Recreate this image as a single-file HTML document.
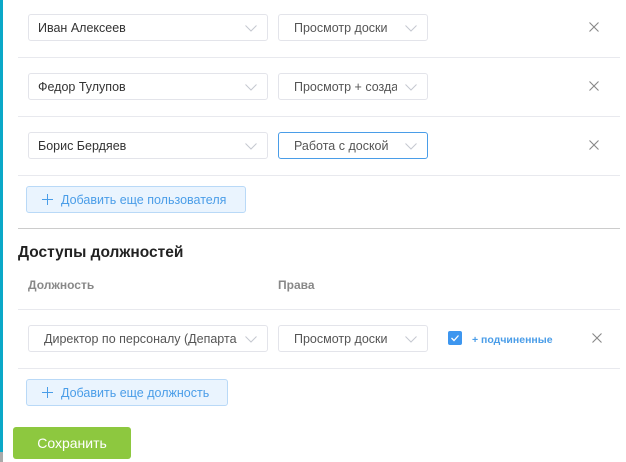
<!DOCTYPE html>
<html><head><meta charset="utf-8"><style>
body{margin:0;width:626px;height:462px;background:#fff;font-family:"Liberation Sans","Noto Sans CJK SC",sans-serif;position:relative;overflow:hidden}
.bar{position:absolute;left:0;top:0;width:3px;height:452px;background:#0aa8c8}
.bar2{position:absolute;left:0;top:452px;width:3px;height:10px;background:#aaa}
.sel{position:absolute;height:27px;border:1px solid #e3e4ea;border-radius:3px;box-sizing:border-box;font-size:12.5px;color:#333;line-height:27px;padding-left:9px;white-space:nowrap;overflow:hidden}
.sel.r{color:#555;padding-left:15px}
.sel svg{position:absolute;right:10px;top:10px}
.sel .t{display:block;overflow:hidden;margin-right:30px}
.hr{position:absolute;left:18px;width:602px;height:1px;background:#e8e9ee}
.x{position:absolute;width:10px;height:10px}
.add{position:absolute;height:27px;border:1px solid #b9d9f7;background:#eaf4fe;border-radius:3px;box-sizing:border-box;color:#4a9de8;font-size:12.5px;line-height:27px;padding-left:34px}
.add:before{content:"";position:absolute;left:15px;top:7px;width:11px;height:11px;background:linear-gradient(#4a9de8,#4a9de8) center/11px 1px no-repeat,linear-gradient(#4a9de8,#4a9de8) center/1px 11px no-repeat}
.lbl{position:absolute;top:278px;font-size:12px;font-weight:bold;color:#888}
</style></head><body>
<div class="bar"></div><div class="bar2"></div>
<svg width="0" height="0" style="position:absolute"><defs><symbol id="ch" viewBox="0 0 12 7"><path d="M0.5 0.5L6 6L11.5 0.5" fill="none" stroke="#c5c8d0" stroke-width="1"/></symbol><symbol id="xx" viewBox="0 0 10 10"><path d="M0.5 0.5L9.5 9.5M9.5 0.5L0.5 9.5" stroke="#888" stroke-width="1.1"/></symbol></defs></svg>

<div class="sel" style="left:28px;top:14px;width:240px"><span class="t">Иван Алексеев</span><svg width="12" height="7"><use href="#ch"/></svg></div>
<div class="sel r" style="left:278px;top:14px;width:150px"><span class="t">Просмотр доски</span><svg width="12" height="7"><use href="#ch"/></svg></div>
<svg class="x" style="left:589px;top:22px"><use href="#xx"/></svg>
<div class="hr" style="top:57px"></div>

<div class="sel" style="left:28px;top:73px;width:240px"><span class="t">Федор Тулупов</span><svg width="12" height="7"><use href="#ch"/></svg></div>
<div class="sel r" style="left:278px;top:73px;width:150px"><span class="t">Просмотр + создание</span><svg width="12" height="7"><use href="#ch"/></svg></div>
<svg class="x" style="left:589px;top:81px"><use href="#xx"/></svg>
<div class="hr" style="top:116px"></div>

<div class="sel" style="left:28px;top:132px;width:240px"><span class="t">Борис Бердяев</span><svg width="12" height="7"><use href="#ch"/></svg></div>
<div class="sel r" style="left:278px;top:132px;width:150px;border-color:#4a9de8"><span class="t">Работа с доской</span><svg width="12" height="7"><use href="#ch"/></svg></div>
<svg class="x" style="left:589px;top:140px"><use href="#xx"/></svg>
<div class="hr" style="top:175px"></div>

<div class="add" style="left:26px;top:186px;width:220px">Добавить еще пользователя</div>
<div class="hr" style="top:228px;background:#ccc"></div>

<div style="position:absolute;left:18px;top:244px;font-size:15.5px;font-weight:bold;color:#222">Доступы должностей</div>
<div class="lbl" style="left:28px">Должность</div>
<div class="lbl" style="left:278px">Права</div>
<div class="hr" style="top:309px"></div>

<div class="sel r" style="left:28px;top:325px;width:240px"><span class="t">Директор по персоналу (Департамент)</span><svg width="12" height="7"><use href="#ch"/></svg></div>
<div class="sel r" style="left:278px;top:325px;width:150px"><span class="t">Просмотр доски</span><svg width="12" height="7"><use href="#ch"/></svg></div>
<div style="position:absolute;left:448px;top:331px;width:14px;height:14px;background:#3d96ef;border-radius:2px"><svg width="14" height="14"><path d="M3.5 7L6 9.5L10.5 4.5" fill="none" stroke="#fff" stroke-width="1.3"/></svg></div>
<div style="position:absolute;left:472px;top:334px;font-size:10.5px;font-weight:bold;color:#4a9de8">+ подчиненные</div>
<svg class="x" style="left:592px;top:333px"><use href="#xx"/></svg>
<div class="hr" style="top:368px"></div>

<div class="add" style="left:26px;top:379px;width:202px">Добавить еще должность</div>

<div style="position:absolute;left:13px;top:427px;width:118px;height:32px;background:#8dc83f;border-radius:3px;color:#fff;font-size:14px;line-height:32px;text-align:center">Сохранить</div>
</body></html>
